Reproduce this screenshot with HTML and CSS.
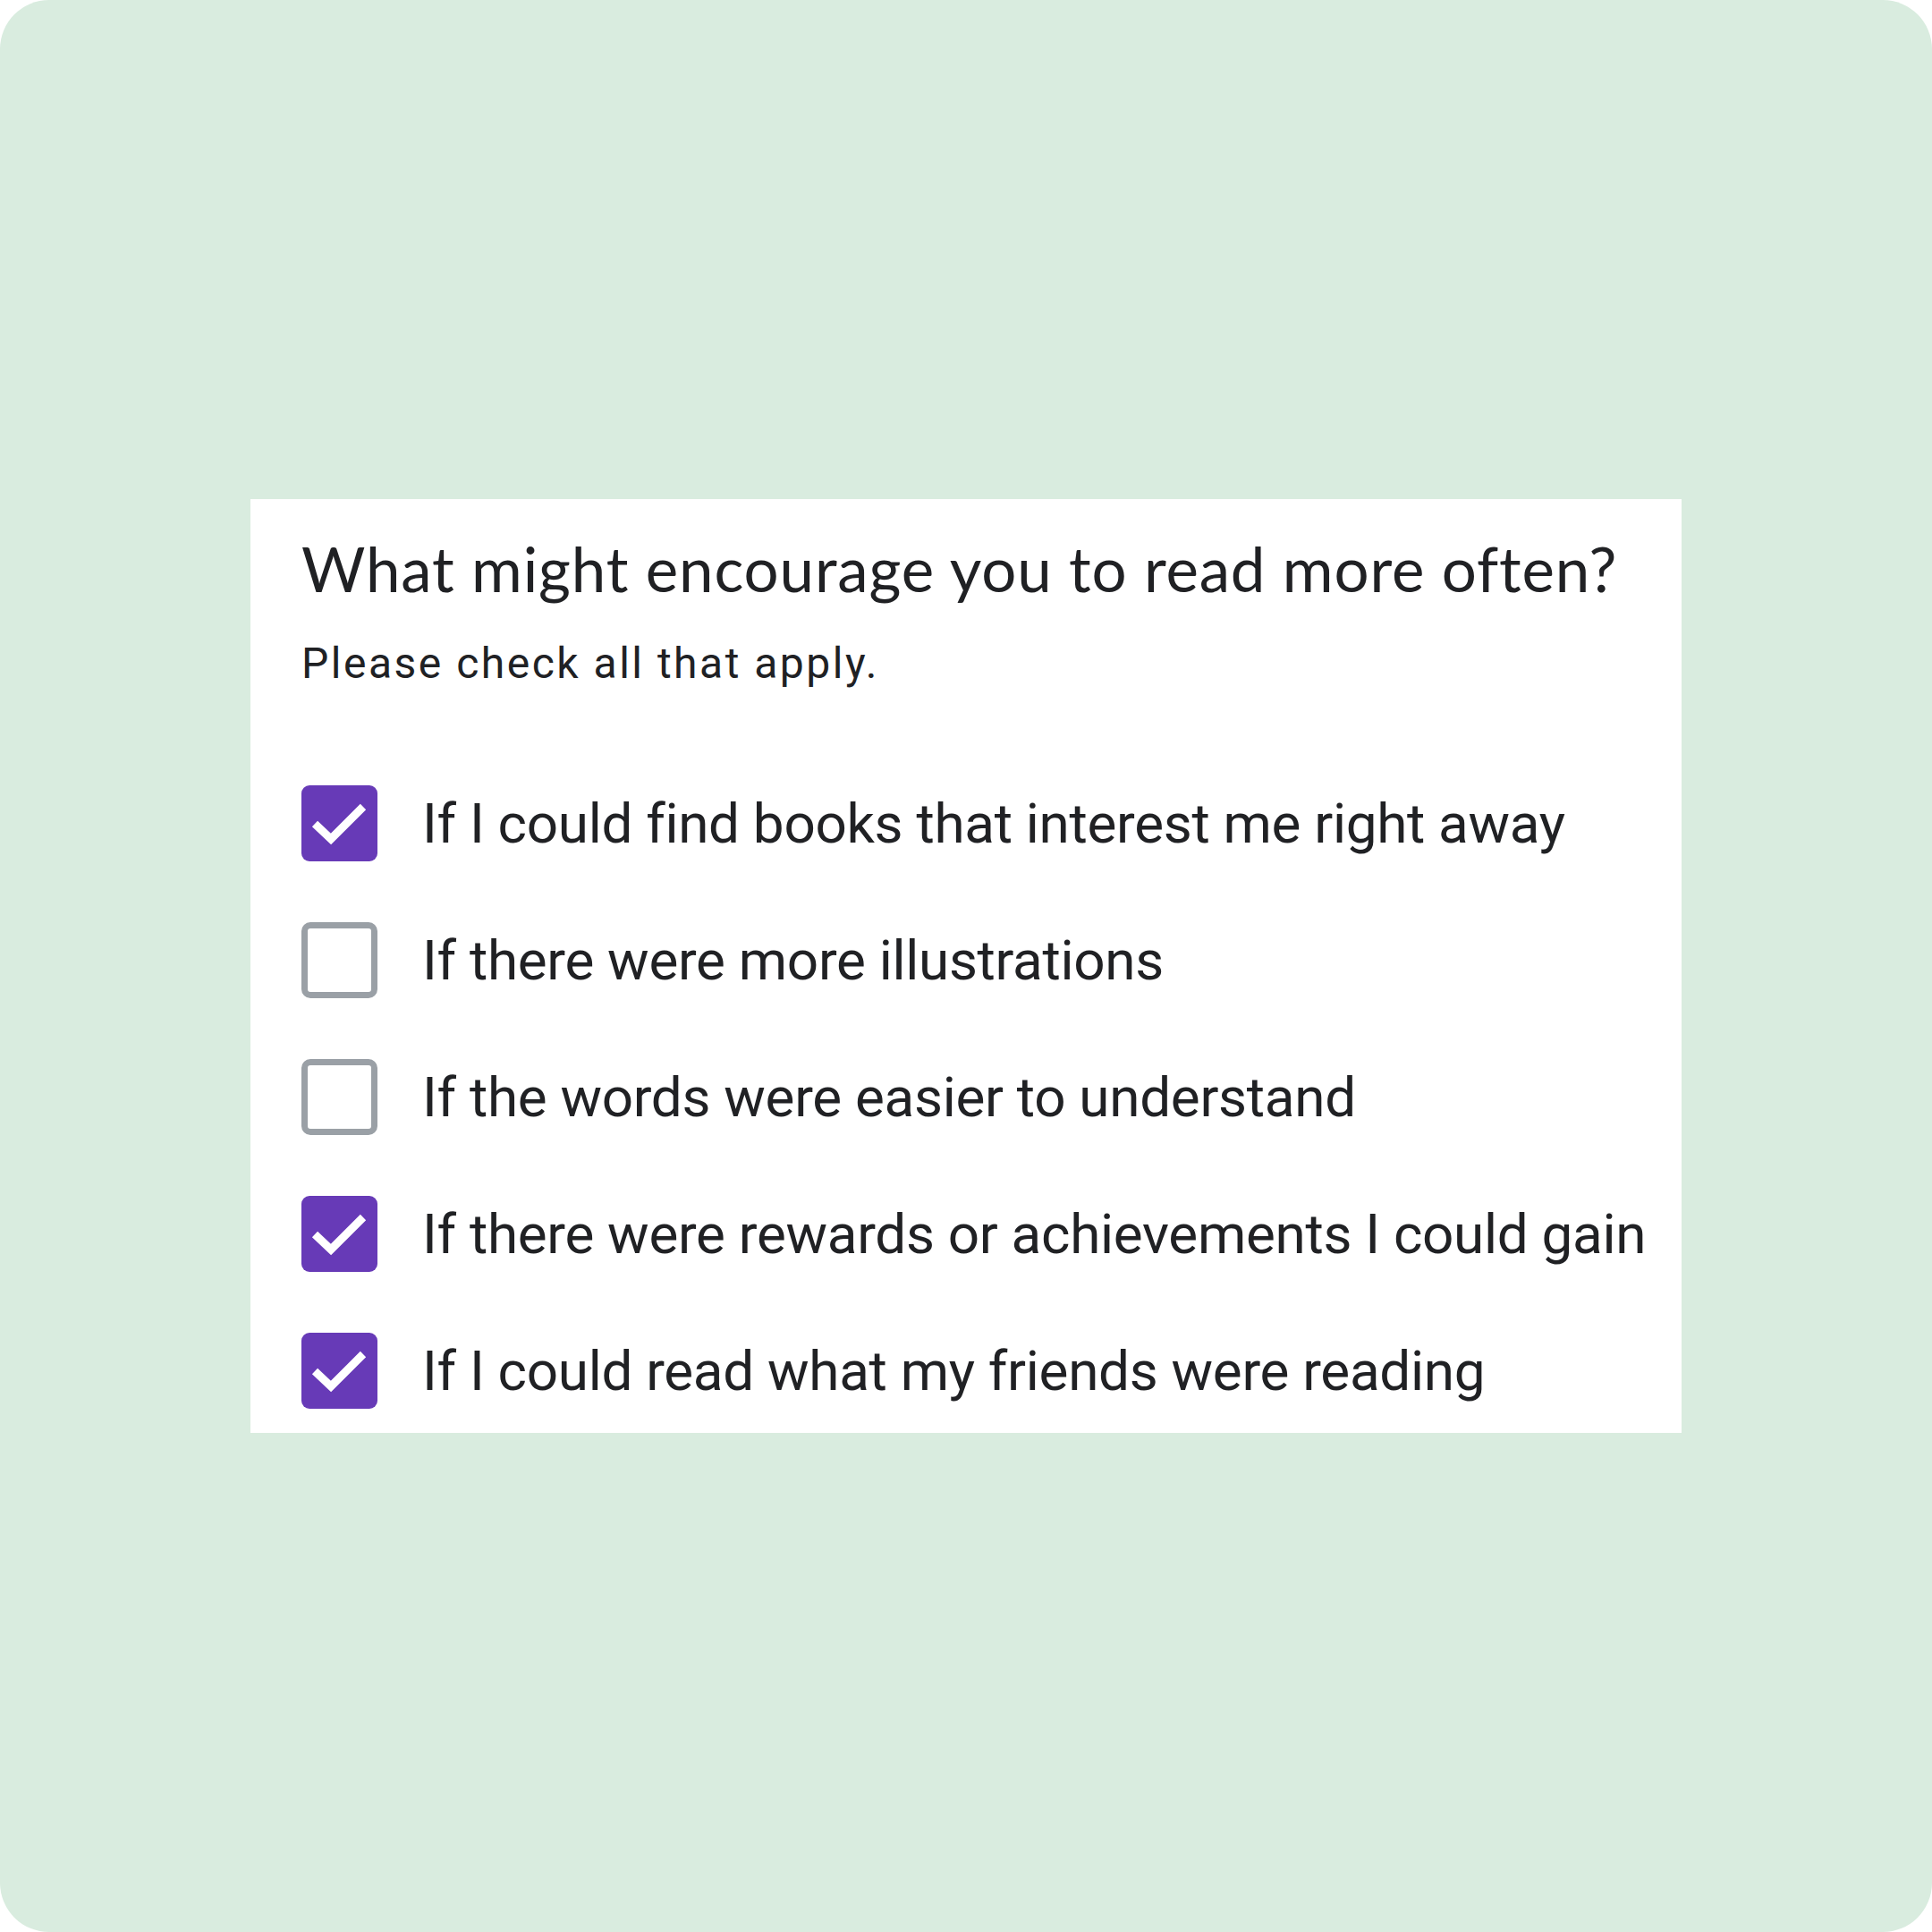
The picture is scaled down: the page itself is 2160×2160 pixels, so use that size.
FILE: index.html
```html
<!DOCTYPE html>
<html lang="en">
<head>
<meta charset="utf-8">
<title>Reading survey</title>
<link rel="stylesheet" href="styles.css">
</head>
<body>
<div class="page">
  <section class="card">
    <h1 class="title">What might encourage you to read more often?</h1>
    <p class="subtitle">Please check all that apply.</p>
    <ul class="options">
      <li class="option">
        <span class="box checked"><svg viewBox="0 0 85 85"><polyline points="15,43 33,60 69,24"/></svg></span>
        <span class="label">If I could find books that interest me right away</span>
      </li>
      <li class="option">
        <span class="box"></span>
        <span class="label">If there were more illustrations</span>
      </li>
      <li class="option">
        <span class="box"></span>
        <span class="label">If the words were easier to understand</span>
      </li>
      <li class="option">
        <span class="box checked"><svg viewBox="0 0 85 85"><polyline points="15,43 33,60 69,24"/></svg></span>
        <span class="label">If there were rewards or achievements I could gain</span>
      </li>
      <li class="option">
        <span class="box checked"><svg viewBox="0 0 85 85"><polyline points="15,43 33,60 69,24"/></svg></span>
        <span class="label">If I could read what my friends were reading</span>
      </li>
    </ul>
  </section>
</div>
</body>
</html>
```
FILE: styles.css
```css
html, body {
  margin: 0;
  padding: 0;
  background: #ffffff;
}
.page {
  width: 2160px;
  height: 2160px;
  background: #d9ecdf;
  border-radius: 55px;
  display: flex;
  align-items: center;
  justify-content: center;
}
.card {
  width: 1600px;
  height: 1044px;
  box-sizing: border-box;
  background: #ffffff;
  padding: 38px 40px 0 57px;
  color: #202124;
}
.title {
  margin: 0;
  font-family: Lato, "Open Sans", sans-serif;
  font-weight: 400;
  font-size: 69px;
  line-height: 80px;
  letter-spacing: 0.85px;
  color: #202124;
}
.subtitle {
  margin: 36px 0 0 0;
  font-family: Roboto, "Liberation Sans", sans-serif;
  font-size: 48px;
  line-height: 60px;
  letter-spacing: 2.5px;
}
.options {
  list-style: none;
  margin: 106px 0 0 0;
  padding: 0;
  display: flex;
  flex-direction: column;
  gap: 68px;
}
.option {
  display: flex;
  align-items: center;
  gap: 50px;
  height: 85px;
}
.box {
  flex: none;
  width: 85px;
  height: 85px;
  box-sizing: border-box;
  border: 7px solid #9aa0a6;
  border-radius: 10px;
  background: #ffffff;
}
.box.checked {
  border: none;
  background: #673ab7;
  border-radius: 9px;
}
.box svg {
  display: block;
  width: 85px;
  height: 85px;
}
.box polyline {
  fill: none;
  stroke: #ffffff;
  stroke-width: 9;
  stroke-linejoin: miter;
  stroke-linecap: butt;
}
.label {
  font-family: Roboto, "Liberation Sans", sans-serif;
  font-size: 62px;
  line-height: 85px;
  letter-spacing: -0.3px;
  white-space: nowrap;
}
```
